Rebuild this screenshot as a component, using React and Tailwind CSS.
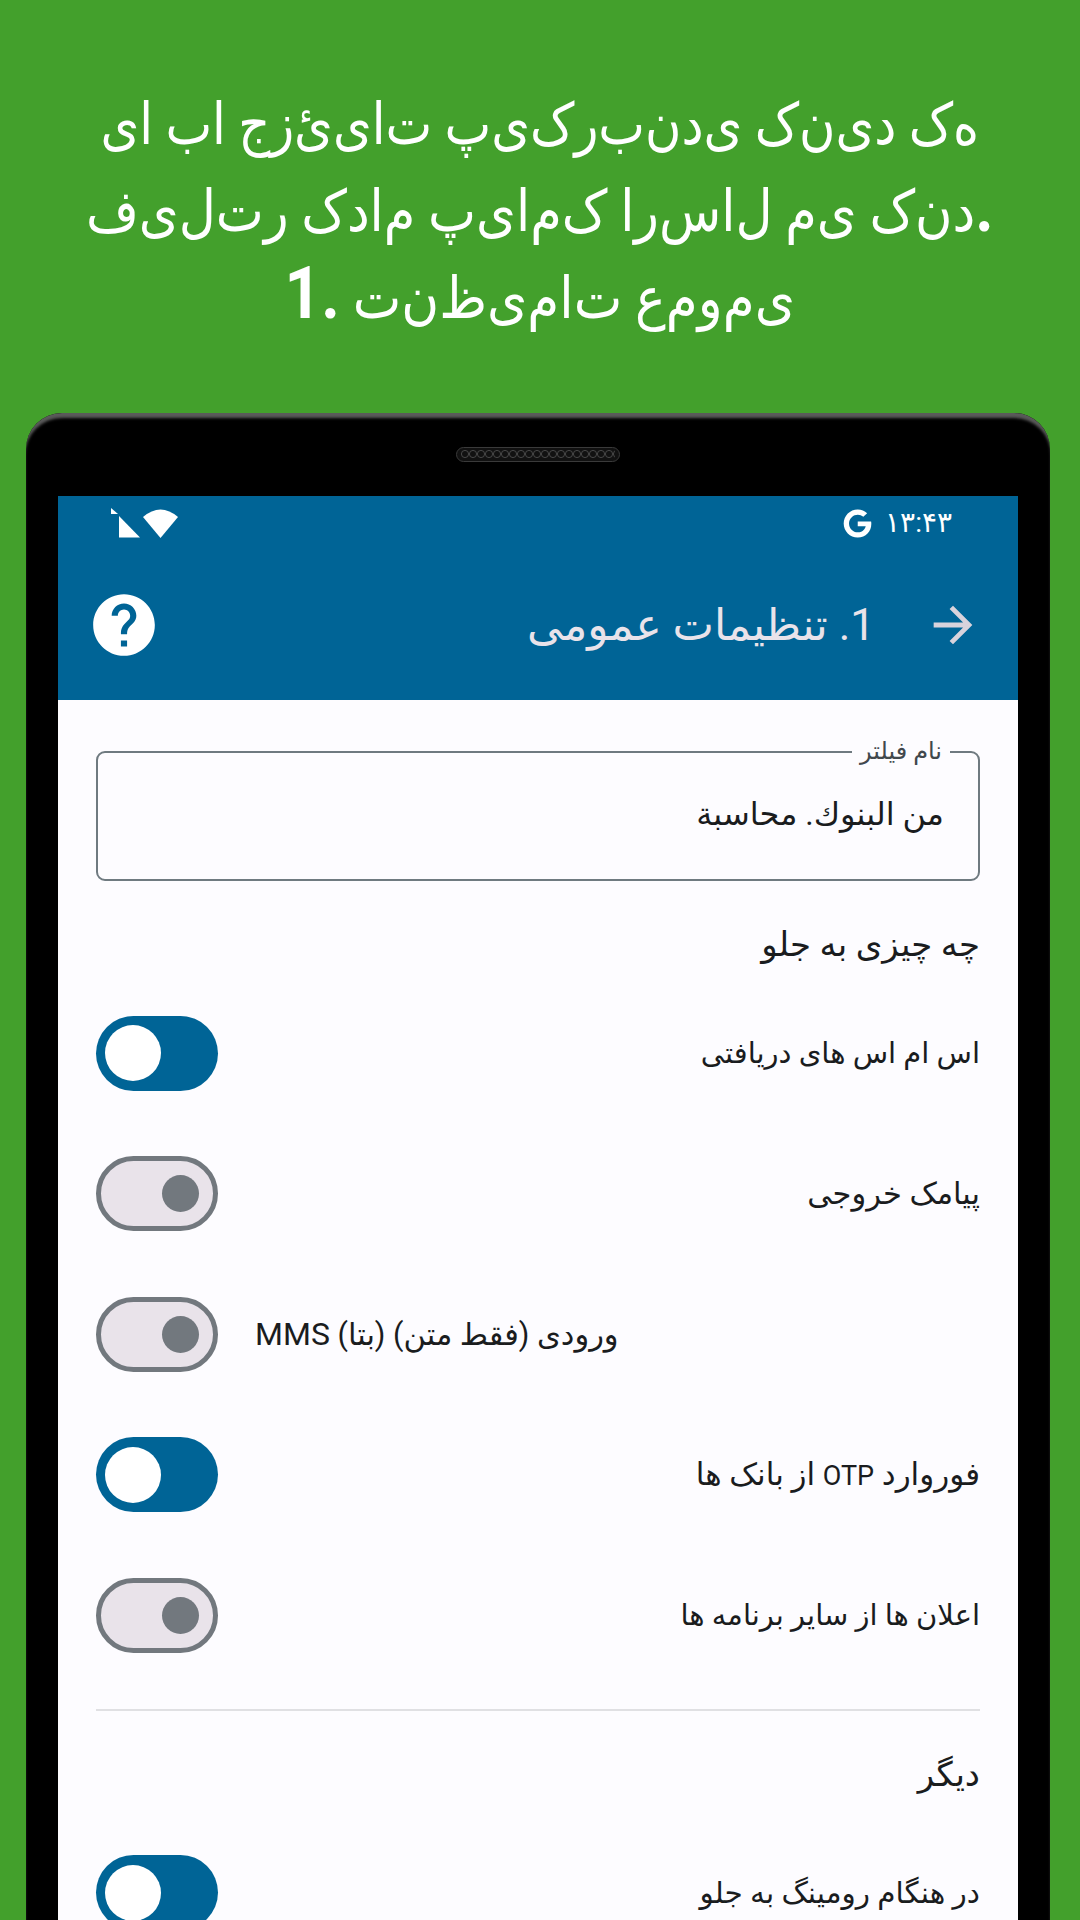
import React from 'react'
import { MdArrowForward, MdHelp } from 'react-icons/md'
import { FaGoogle } from 'react-icons/fa'

// the store banner shows the letters unjoined and running left to right
const unjoined = (text) => text.split('').join('\u200c')

const Toggle = ({ on }) =>
  on ? (
    <div className="flex items-center w-[122px] h-[75px] rounded-full bg-[#006496] pl-[9px] shrink-0">
      <div className="w-[56px] h-[56px] rounded-full bg-white" />
    </div>
  ) : (
    <div className="flex items-center justify-end w-[122px] h-[75px] rounded-full bg-[#e9e3ea] border-[5px] border-[#72787e] pr-[14px] shrink-0">
      <div className="w-[37px] h-[37px] rounded-full bg-[#72787e]" />
    </div>
  )

const Row = ({ on, children, left, size = 'text-[29px]' }) => (
  <div className="flex items-center h-[140.5px] gap-[37px]">
    <Toggle on={on} />
    <div dir="rtl" className={`flex-1 text-[#1a1c1e] ${size} ${left ? 'text-left' : 'text-right'}`}>
      {children}
    </div>
  </div>
)

const Speaker = () => (
  <div className="flex items-center justify-center h-[15px] w-[164px] rounded-full border border-[#3a3a3a] bg-[#111] overflow-hidden">
    <svg width="154" height="9" viewBox="0 0 154 9">
      {Array.from({ length: 20 }).map((_, i) => (
        <circle key={i} cx={4 + i * 8} cy="4" r="3.6" fill="none" stroke="#555" strokeWidth="0.8" />
      ))}
    </svg>
  </div>
)

export default function App() {
  return (
    <div className="flex flex-col h-[1920px] overflow-hidden bg-[#43a02c] font-['Roboto','DejaVu_Sans',sans-serif]">
      <div className="flex flex-col items-center justify-center shrink-0 h-[413px] pt-[10px] w-full text-white text-[58px] leading-[87px]">
        <div className="scale-x-[0.855] whitespace-nowrap [unicode-bidi:bidi-override] [direction:ltr]">{unjoined('یا با جزئیات پیکربندی کنید که')}</div>
        <div className="scale-x-[0.88] whitespace-nowrap [unicode-bidi:bidi-override] [direction:ltr]">{unjoined('فیلتر کدام پیامک ارسال می کند')}<b className="text-[72px] leading-[0]">.</b></div>
        <div className="scale-x-[0.89] whitespace-nowrap [unicode-bidi:bidi-override] [direction:ltr]"><b className="text-[72px] leading-[0]">1.</b> {unjoined('تنظیمات عمومی')}</div>
      </div>

      <div className="flex flex-col w-[1024px] ml-[26px] flex-1 px-[32px] bg-black rounded-t-[36px] shadow-[inset_0_6px_3px_-1px_#5a5a5a]">
        <div className="flex items-center justify-center shrink-0 h-[83px] pb-[1px]">
          <Speaker />
        </div>

        <div className="flex-1 flex flex-col bg-[#fdfcff]">
          <div className="bg-[#006496]">
            <div className="flex items-center justify-between h-[54px] pl-[53px] pr-[66px]">
              <div className="flex items-center gap-[3px]">
                <svg width="29" height="30" viewBox="0 0 29 30" fill="white">
                  <path d="M0 0 L7 6 H0 Z" />
                  <path d="M8 8 L29 29.5 H8 Z" />
                </svg>
                <svg width="35" height="30" viewBox="0 0 35 30" fill="white">
                  <path d="M0 9 Q17.5 -6 35 9 L17.5 30 Z" />
                </svg>
              </div>
              <div className="flex items-center gap-[13px] text-white">
                <FaGoogle size={29} />
                <span className="text-[28px] leading-none">۱۳:۴۳</span>
              </div>
            </div>
            <div className="flex items-center justify-between h-[150px] pl-[29px] pr-[36px]">
              <MdHelp size={74} className="text-white" />
              <div className="flex items-center gap-[49px] text-[#e9e3ea]">
                <span dir="rtl" className="text-[44px] leading-none">1. تنظیمات عمومی</span>
                <MdArrowForward size={58} className="text-[#d8d3dc]" />
              </div>
            </div>
          </div>

          <div className="flex flex-col px-[38px] pt-[51px]">
            <div className="relative h-[130px] rounded-[9px] border-[2.5px] border-[#6f7a80] flex items-center justify-end pr-[34px] pb-[4px]">
              <span dir="rtl" className="absolute -top-[15px] right-[28px] px-[8px] bg-[#fdfcff] text-[24px] leading-[26px] text-[#41484d]">نام فیلتر</span>
              <span dir="rtl" className="text-[32px] text-[#1a1c1e]">من البنوك. محاسبة</span>
            </div>

            <div dir="rtl" className="text-[34px] leading-[40px] mt-[43px] mb-[19px] text-[#1a1c1e]">چه چیزی به جلو</div>

            <Row on>اس ام اس های دریافتی</Row>
            <Row size="text-[30.5px]">پیامک خروجی</Row>
            <Row left size="text-[30.5px]">ورودی (فقط متن) (بتا) <span className="text-[32px]">MMS</span></Row>
            <Row on size="text-[31px]">فوروارد <span className="text-[27px]">OTP</span> از بانک ها</Row>
            <Row>اعلان ها از سایر برنامه ها</Row>

            <div className="h-[2px] bg-[#e0e0e3] mt-[23px]" />
            <div dir="rtl" className="text-[34px] leading-[40px] mt-[43px] mb-[29px] text-[#1a1c1e]">دیگر</div>
            <Row on size="text-[29.5px]">در هنگام رومینگ به جلو</Row>
          </div>
        </div>
      </div>
    </div>
  )
}
